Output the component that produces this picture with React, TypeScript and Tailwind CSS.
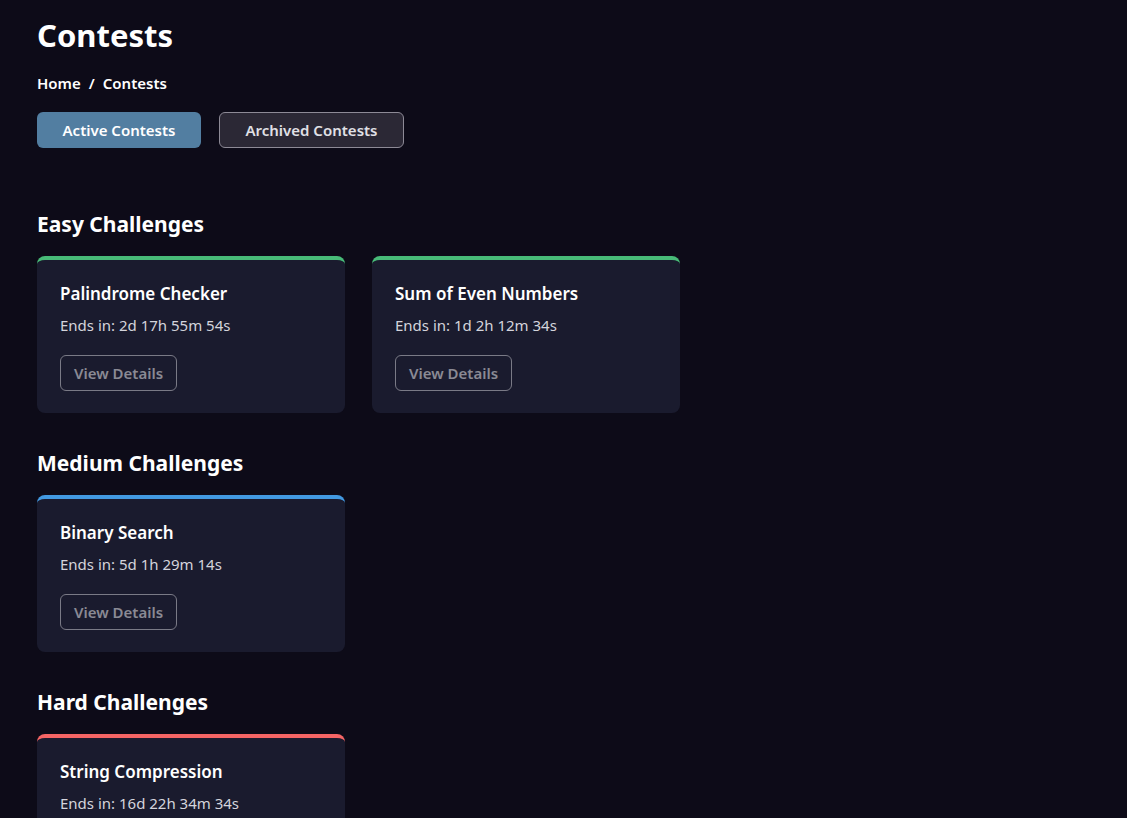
const sections = [
  {
    title: "Easy Challenges",
    accent: "border-t-[#48bb78]",
    items: [
      { name: "Palindrome Checker", ends: "2d 17h 55m 54s" },
      { name: "Sum of Even Numbers", ends: "1d 2h 12m 34s" },
    ],
  },
  {
    title: "Medium Challenges",
    accent: "border-t-[#4299e1]",
    items: [{ name: "Binary Search", ends: "5d 1h 29m 14s" }],
  },
  {
    title: "Hard Challenges",
    accent: "border-t-[#f56565]",
    items: [{ name: "String Compression", ends: "16d 22h 34m 34s" }],
  },
];

const ContestCard = ({ name, ends, accent }: { name: string; ends: string; accent: string }) => {
  return (
    <div className={`w-[308px] rounded-lg border-t-4 ${accent} bg-[#1a1b2e] px-[23px] pt-[22px] pb-[22px]`}>
      <h3 className="text-[17px] font-semibold leading-6 text-white">{name}</h3>
      <p className="mt-[9px] text-[15px] leading-5 text-[#d4d4dc]">Ends in: {ends}</p>
      <button className="mt-[20px] h-9 rounded-md border border-[#7a7a86] px-[13px] text-[15px] font-semibold text-[#8a8a94]">
        View Details
      </button>
    </div>
  );
};

const App = () => {
  return (
    <div className="min-h-[818px] bg-[#0d0b18] px-[37px] pt-[14px] pb-10 font-['Noto_Sans',sans-serif] text-white">
      <h1 className="text-[31px] font-bold leading-[42px]">Contests</h1>

      {/* Breadcrumb */}
      <nav className="mt-[17px] flex items-center gap-2 text-[15px] font-semibold leading-5">
        <span>Home</span>
        <span>/</span>
        <span>Contests</span>
      </nav>

      {/* Tabs */}
      <div className="mt-[19px] flex gap-[18px]">
        <button className="h-9 w-[164px] rounded-md bg-[#527ea1] text-[15px] font-semibold text-white">
          Active Contests
        </button>
        <button className="h-9 w-[185px] rounded-md border border-[#8d8a96] bg-[#2b2835] text-[15px] font-semibold text-[#e0e0e6]">
          Archived Contests
        </button>
      </div>

      <div className="mt-[62px] flex flex-col gap-[36px]">
        {sections.map((s) => (
          <section key={s.title}>
            <h2 className="text-[21px] font-bold leading-7">{s.title}</h2>
            <div className="mt-[18px] flex gap-[27px]">
              {s.items.map((it) => (
                <ContestCard key={it.name} name={it.name} ends={it.ends} accent={s.accent} />
              ))}
            </div>
          </section>
        ))}
      </div>
    </div>
  );
};

export default App;
